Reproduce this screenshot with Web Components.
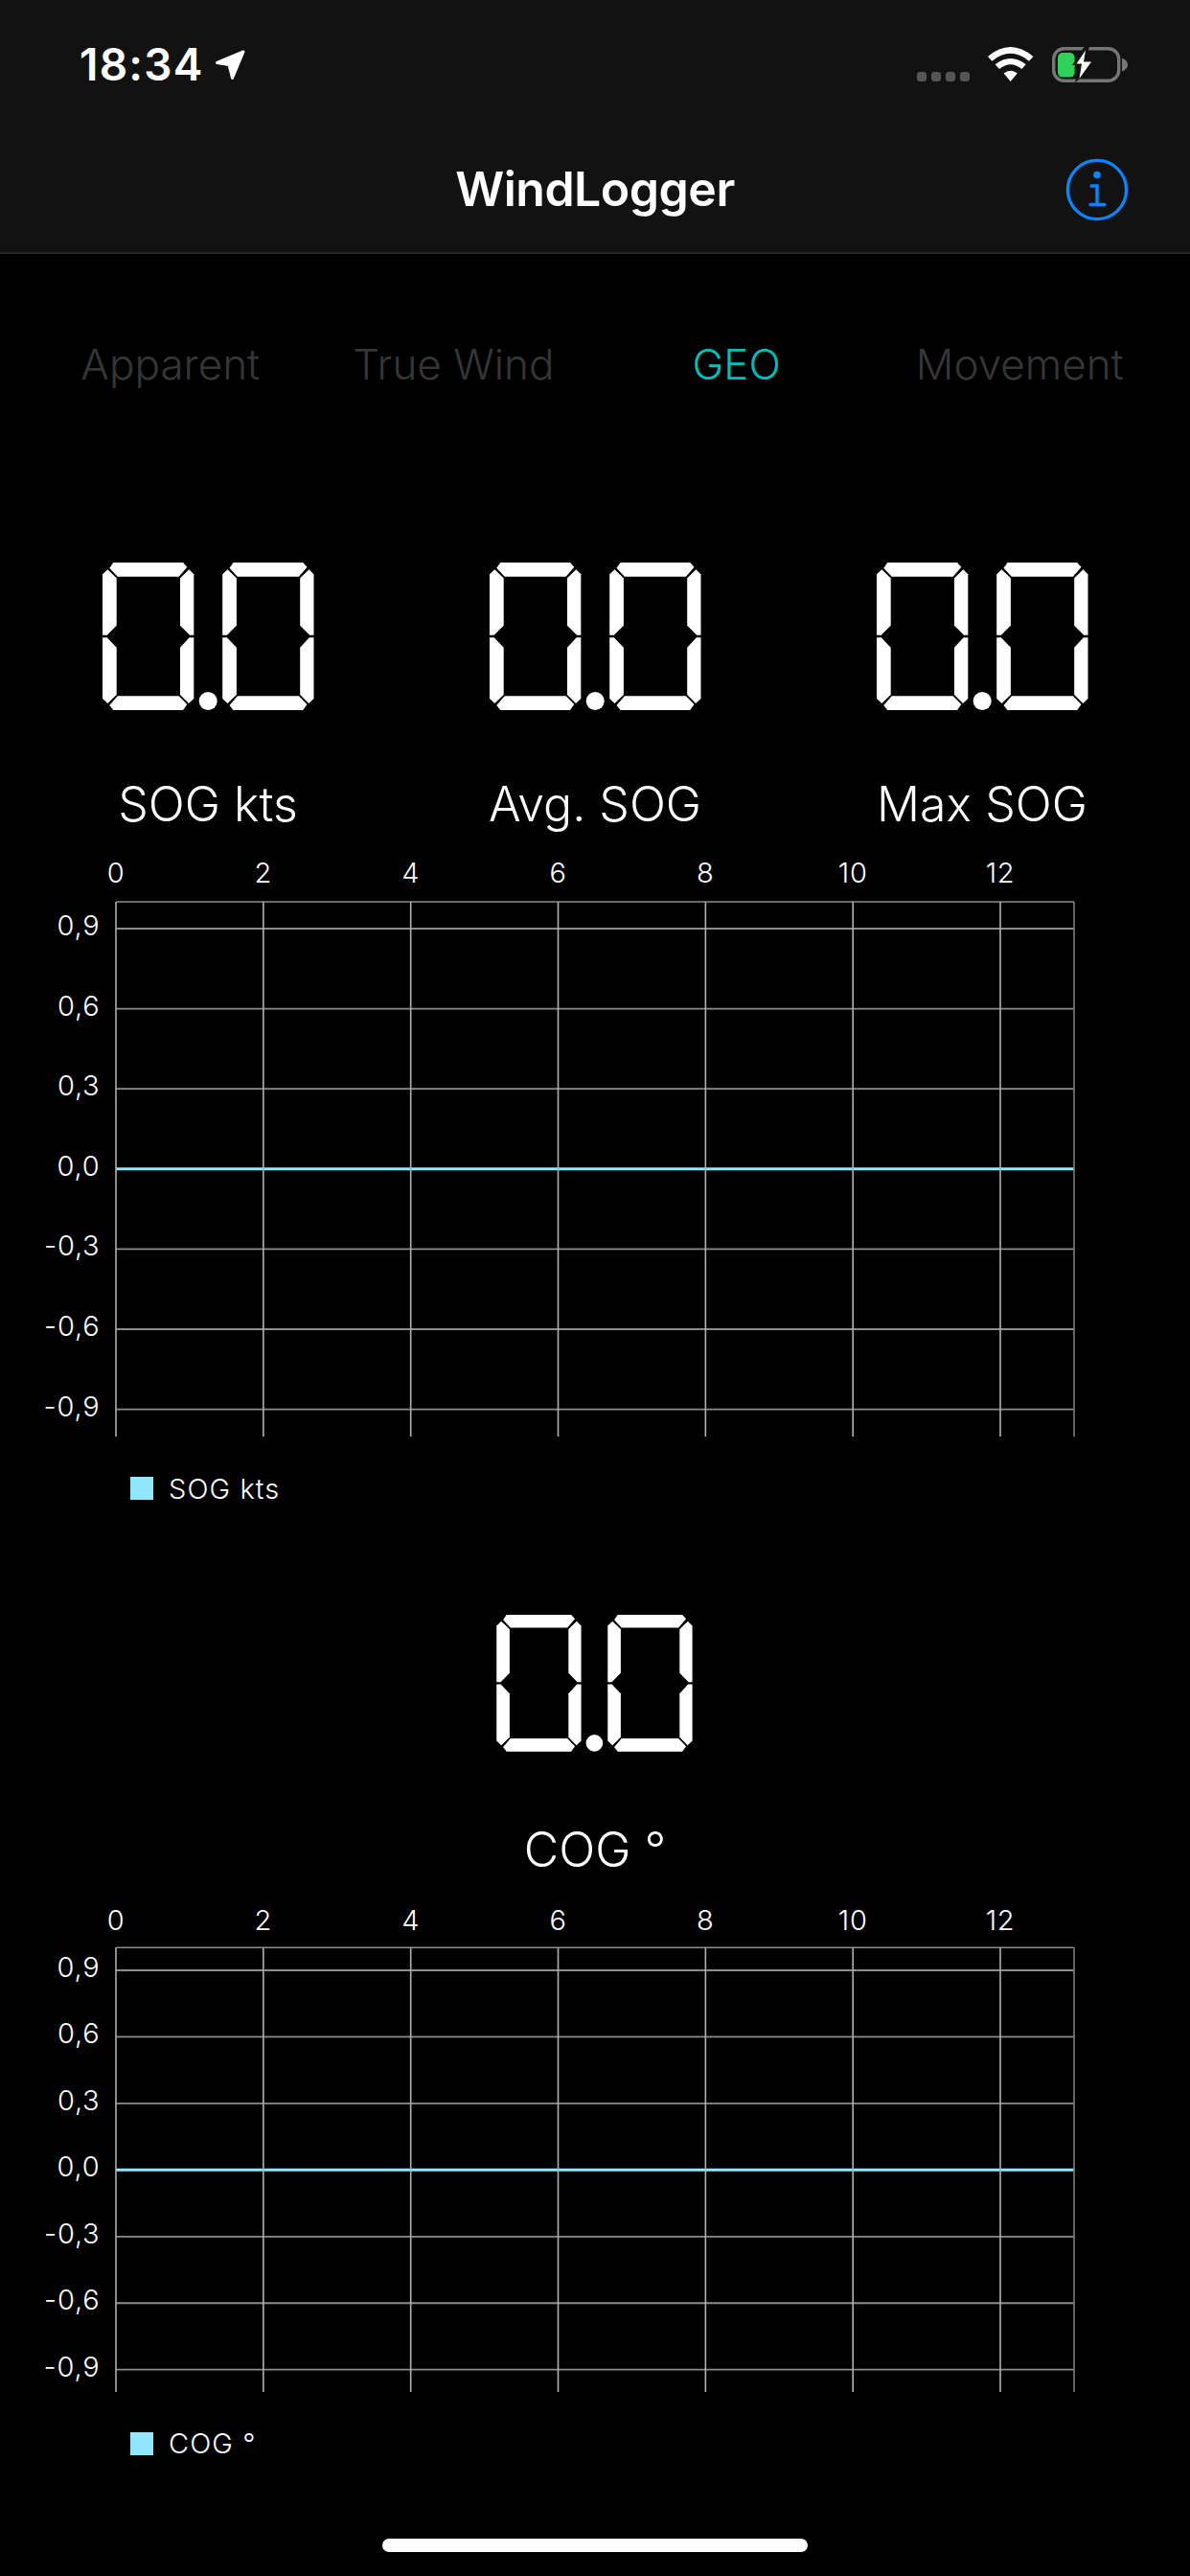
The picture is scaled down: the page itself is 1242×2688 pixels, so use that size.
<!DOCTYPE html>
<html>
<head>
<meta charset="utf-8">
<title>WindLogger</title>
<style>
  html, body { margin: 0; background: #000; }
  body { width: 1242px; height: 2688px; overflow: hidden; font-family: Inter, "Liberation Sans", sans-serif; color: #fff; }
  main { display: flex; flex-direction: column; }
</style>
</head>
<body>
<main>
  <app-header title-text="WindLogger"></app-header>
  <tab-strip tabs="Apparent,True Wind,GEO,Movement" active="GEO"></tab-strip>
  <gauge-row>
    <wind-gauge value="0.0" label="SOG kts"></wind-gauge>
    <wind-gauge value="0.0" label="Avg. SOG"></wind-gauge>
    <wind-gauge value="0.0" label="Max SOG"></wind-gauge>
  </gauge-row>
  <wind-chart top-line="51" first="79" step="83.6" bottom="609" style="margin-top:21px"></wind-chart>
  <chart-legend style="margin-top:42px">SOG kts</chart-legend>
  <wind-gauge value="0.0" label="COG °" size="small" style="margin-top:120px"></wind-gauge>
  <wind-chart top-line="49.3" first="73" step="69.45" bottom="513" style="margin-top:23px"></wind-chart>
  <chart-legend style="margin-top:42px">COG °</chart-legend>
  <home-bar></home-bar>
</main>

<script>
class AppHeader extends HTMLElement {
  constructor() {
    super();
    this.shadow = this.attachShadow({ mode: 'open' });
  }
  connectedCallback() {
    this.shadow.innerHTML = `
    <style>
      :host { display: block; background: #121212; border-bottom: 2px solid #262626; height: 263px; box-sizing: content-box; }
      .status { height: 132px; display: flex; justify-content: space-between; padding: 0 64px 0 83px; box-sizing: border-box; }
      .left { display: flex; gap: 12px; align-items: flex-start; padding-top: 40px; }
      .time { font-size: 46px; font-weight: 600; line-height: 55px; letter-spacing: 1.2px; }
      .right { display: flex; align-items: flex-start; padding-top: 49px; }
      .dots { display: flex; gap: 5px; margin-top: 26px; margin-right: 19px; }
      .dots i { width: 10px; height: 10px; border-radius: 3px; background: #555; }
      svg { display: block; }
      .wifi { margin-right: 19px; }
      .nav { height: 131px; display: flex; align-items: center; justify-content: space-between; padding: 0 64px 0 64px; box-sizing: border-box; }
      .spacer { width: 66px; }
      h1 { margin: 0; font-size: 50px; font-weight: 600; letter-spacing: -0.5px; margin-top: -1px; }
    </style>
    <div class="status">
      <div class="left">
        <span class="time">18:34</span>
        <svg width="32" height="32" viewBox="0 0 32 32" style="margin-top:12px"><path d="M2.5 13.5 L30 2 L18.5 29.5 L15 15.5 Z" fill="#fff" stroke="#fff" stroke-width="3" stroke-linejoin="round"/></svg>
      </div>
      <div class="right">
        <div class="dots"><i></i><i></i><i></i><i></i></div>
        <svg class="wifi" width="48" height="36" viewBox="0 0 48 36" fill="#fff">
          <path d="M0 10 Q23.7 -10 47.4 10 L43 14.7 Q23.7 -1 4.4 14.7 Z"/>
          <path d="M7.7 18.3 Q23.7 5.5 39.7 18.3 L35.4 23 Q23.7 13.5 12 23 Z"/>
          <path d="M16.6 27.6 Q23.7 21.7 30.8 27.6 L23.7 36 Z"/>
        </svg>
        <svg width="80" height="38" viewBox="0 0 80 38">
          <rect x="1.7" y="1.7" width="68" height="33.5" rx="11" fill="none" stroke="#767676" stroke-width="3.4"/>
          <path d="M73 11.5 Q79 14 79 18.5 Q79 23 73 25.5 Z" fill="#767676"/>
          <rect x="6" y="6" width="17.6" height="25.6" rx="5" fill="#30d158"/>
          <path d="M33.5 0 L21 19 L28 19 L24 38 L44.5 14 L34 14 L39 0 Z" fill="#121212"/>
          <path d="M35 3.5 L25.5 17.5 L31 17.5 L28.5 33 L41 15.5 L33 15.5 Z" fill="#fff"/>
        </svg>
      </div>
    </div>
    <div class="nav">
      <div class="spacer"></div>
      <h1>${this.getAttribute('title-text')}</h1>
      <svg width="66" height="66" viewBox="0 0 66 66" fill="none" stroke="#0a84ff" stroke-width="3.4" stroke-linecap="round">
        <circle cx="33" cy="33" r="30.6"/>
        <circle cx="33" cy="17.5" r="3.8" fill="#0a84ff" stroke="none"/>
        <path d="M27 29 H33 V48 M26 48.5 H41"/>
      </svg>
    </div>`;
  }
}

class TabStrip extends HTMLElement {
  constructor() {
    super();
    this.shadow = this.attachShadow({ mode: 'open' });
  }
  connectedCallback() {
    const active = this.getAttribute('active');
    const tabs = this.getAttribute('tabs').split(',').map(t =>
      `<span class="${t === active ? 'on' : ''}">${t}</span>`).join('');
    this.shadow.innerHTML = `
    <style>
      :host { display: grid; grid-template-columns: repeat(4, 1fr); padding: 0 30px; margin-top: 85px; height: 60px; }
      span { text-align: center; font-size: 44px; line-height: 60px; font-weight: 300; color: #363636; white-space: nowrap; }
      .on { color: #00bdb8; }
    </style>${tabs}`;
  }
}

class GaugeRow extends HTMLElement {
  constructor() {
    super();
    this.shadow = this.attachShadow({ mode: 'open' });
    this.shadow.innerHTML = `
    <style>
      :host { display: grid; grid-template-columns: repeat(3, 404px); padding: 0 15px; margin-top: 177px; }
    </style><slot></slot>`;
  }
}

// segments of one digit, 96 wide and 154 high
const SEGMENTS = {
  a: '11.3,0 84,0 88.3,4.7 79.7,14.7 15.7,14.7 7.3,5.7',
  f: '0,12.3 5.3,7.3 14.7,16.3 14.7,65.7 4.7,75.7 0,75.7',
  b: '95.3,12.3 90.3,7.3 81,16.3 81,65.7 91,75.7 95.3,75.7',
  e: '0,78.3 4.7,78.3 14.7,88.7 14.7,138 5.3,147 0,142',
  c: '95.3,78.3 90.6,78.3 81,88.7 81,138 90,147 95.3,142',
  d: '7.3,149 15.7,139.3 79.7,139.3 88.3,148 84,154 11.3,154',
  g: '15.7,70 79.7,70 86,77 79.7,84 15.7,84 9,77'
};
const DIGITS = ['abcdef', 'bc', 'abdeg', 'abcdg', 'bcfg', 'acdfg', 'acdefg', 'abc', 'abcdefg', 'abcdfg'];

class WindGauge extends HTMLElement {
  constructor() {
    super();
    this.shadow = this.attachShadow({ mode: 'open' });
  }
  digit(n, x) {
    const segs = DIGITS[n].split('').map(s => `<polygon points="${SEGMENTS[s]}"/>`).join('');
    return `<g transform="translate(${x} 0)">${segs}</g>`;
  }
  connectedCallback() {
    const value = this.getAttribute('value');
    const small = this.getAttribute('size') === 'small';
    const [a, b] = value.split('.');
    const h = small ? 142.7 : 154;
    const w = small ? 205.3 : 221;
    this.shadow.innerHTML = `
    <style>
      :host { display: flex; flex-direction: column; align-items: center; }
      svg { display: block; }
      .label { font-size: 50px; line-height: 60px; font-weight: 300; margin-top: ${small ? 72 : 68}px; white-space: nowrap; }
    </style>
    <svg role="img" aria-label="${value}" width="${w}" height="${h}" viewBox="0 0 221 154" fill="#fff">
      ${this.digit(+a, 0)}
      <circle cx="110.2" cy="144.5" r="9.5"/>
      ${this.digit(+b, 125.2)}
    </svg>
    <div class="label">${this.getAttribute('label')}</div>`;
  }
}

class WindChart extends HTMLElement {
  constructor() {
    super();
    this.shadow = this.attachShadow({ mode: 'open' });
  }
  connectedCallback() {
    const topLine = +this.getAttribute('top-line');
    const first = +this.getAttribute('first');
    const step = +this.getAttribute('step');
    const bottom = +this.getAttribute('bottom');
    const left = 121, stepX = 76.92, right = 1121;
    let out = '';
    // horizontal lines with the value on the left
    [0.9, 0.6, 0.3, 0, -0.3, -0.6, -0.9].forEach((v, i) => {
      const y = first + i * step;
      const zero = v === 0;
      out += `<line x1="${left}" x2="${right}" y1="${y}" y2="${y}" stroke="${zero ? '#8fe8ff' : '#8c8c8c'}" stroke-width="${zero ? 3 : 1.8}"/>`;
      out += `<text class="y" x="104.5" y="${y + 7}">${v.toFixed(1).replace('.', ',')}</text>`;
    });
    out += `<line x1="${left}" x2="${right}" y1="${topLine}" y2="${topLine}" stroke="#8c8c8c" stroke-width="1.4"/>`;
    for (let n = 0; n <= 12; n += 2) {
      const x = left + n * stepX;
      out += `<line x1="${x}" x2="${x}" y1="${topLine}" y2="${bottom}" stroke="#b0b0b0" stroke-width="1.6"/>`;
      out += `<text class="x" x="${x}" y="31">${n}</text>`;
    }
    out += `<line x1="${right}" x2="${right}" y1="${topLine}" y2="${bottom}" stroke="#7c7c7c" stroke-width="1.6"/>`;
    this.shadow.innerHTML = `
    <style>
      :host { display: block; }
      svg { display: block; }
      text { font-family: Inter, "Liberation Sans", sans-serif; font-size: 29px; fill: #fff; font-weight: 300; letter-spacing: 0.8px; }
      .y { text-anchor: end; }
      .x { text-anchor: middle; }
    </style>
    <svg width="1242" height="${bottom}" viewBox="0 0 1242 ${bottom}">${out}</svg>`;
  }
}

class ChartLegend extends HTMLElement {
  constructor() {
    super();
    this.shadow = this.attachShadow({ mode: 'open' });
    this.shadow.innerHTML = `
    <style>
      :host { display: flex; align-items: center; gap: 16px; padding-left: 136px; height: 24px; font-size: 29px; font-weight: 300; letter-spacing: 1.1px; }
      i { width: 24px; height: 24px; background: #8fe8ff; }
    </style><i></i><slot></slot>`;
  }
}

class HomeBar extends HTMLElement {
  constructor() {
    super();
    this.shadow = this.attachShadow({ mode: 'open' });
    this.shadow.innerHTML = `
    <style>
      :host { display: block; width: 444px; height: 14px; margin: 87px auto 0; border-radius: 7px; background: #fff; }
    </style>`;
  }
}

customElements.define('app-header', AppHeader);
customElements.define('tab-strip', TabStrip);
customElements.define('gauge-row', GaugeRow);
customElements.define('wind-gauge', WindGauge);
customElements.define('wind-chart', WindChart);
customElements.define('chart-legend', ChartLegend);
customElements.define('home-bar', HomeBar);
</script>
</body>
</html>
